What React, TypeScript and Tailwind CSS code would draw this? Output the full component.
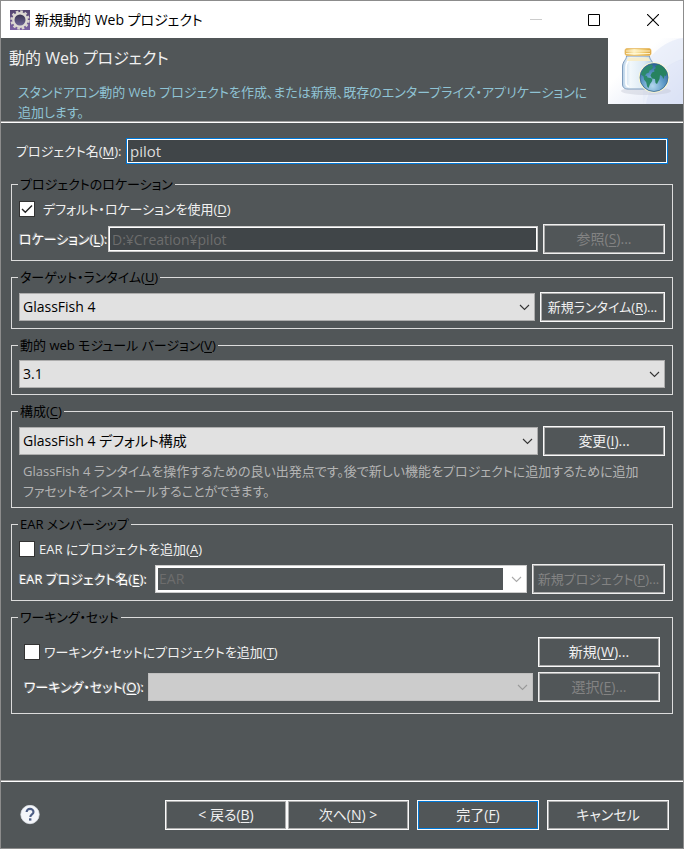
import { useState } from 'react';
import type { ReactNode } from 'react';
import clsx from 'clsx';

const Key = ({ k }: { k: string }) => (
    <>(<span className="underline underline-offset-2">{k}</span>)</>
);

const Chevron = ({ className }: { className?: string }) => (
    <svg className={className} width="11" height="7" viewBox="0 0 11 7" fill="none" stroke="currentColor" strokeWidth="1.1">
        <path d="M1 1l4.500 4.500L10 1" />
    </svg>
);

const EclipseIcon = () => (
    <svg width="20" height="20" viewBox="0 0 20 20">
        <defs>
            <linearGradient id="gear-bg" x1="0" y1="0" x2="0" y2="1">
                <stop offset="0" stopColor="#54466f" />
                <stop offset="1" stopColor="#7c62a4" />
            </linearGradient>
            <linearGradient id="gear-hole" x1="0" y1="0" x2="0" y2="1">
                <stop offset="0" stopColor="#34304a" />
                <stop offset="1" stopColor="#746a9c" />
            </linearGradient>
        </defs>
        <rect width="20" height="20" fill="url(#gear-bg)" />
        <circle cx="10" cy="10" r="8.500" fill="none" stroke="#d8d4cf" strokeWidth="2.400" strokeDasharray="2.600 1.850" />
        <circle cx="10" cy="10" r="6.700" fill="url(#gear-hole)" stroke="#dedad4" strokeWidth="2.400" />
    </svg>
);

const WizardBanner = () => (
    <svg className="block shrink-0" width="75" height="66" viewBox="0 0 75 66">
        <defs>
            <linearGradient id="banner-bg" x1="0" y1="0" x2="1" y2="1">
                <stop offset="0.35" stopColor="#ffffff" />
                <stop offset="1" stopColor="#dce3f5" />
            </linearGradient>
            <linearGradient id="jar" x1="0" y1="0" x2="1" y2="0">
                <stop offset="0" stopColor="#b9d2e8" />
                <stop offset="0.25" stopColor="#f2f8fc" />
                <stop offset="0.7" stopColor="#dbe9f4" />
                <stop offset="1" stopColor="#a9c6df" />
            </linearGradient>
            <linearGradient id="lid" x1="0" y1="0" x2="1" y2="0">
                <stop offset="0" stopColor="#e3b04a" />
                <stop offset="0.35" stopColor="#fdf0bf" />
                <stop offset="0.7" stopColor="#f0cb70" />
                <stop offset="1" stopColor="#dba23a" />
            </linearGradient>
            <radialGradient id="ocean" cx="0.45" cy="0.8" r="0.8">
                <stop offset="0" stopColor="#b4d8ee" />
                <stop offset="0.5" stopColor="#5f9bc8" />
                <stop offset="1" stopColor="#2a5f96" />
            </radialGradient>
        </defs>
        <rect width="75" height="66" fill="url(#banner-bg)" />
        <path d="M35 28C46 12 60 2 75 0v22C58 25 45 42 35 66z" fill="#e6ebf8" opacity="0.7" />
        <path d="M38 66C42 44 54 27 75 21v45z" fill="#d8e0f5" opacity="0.5" />
        <ellipse cx="38" cy="53" rx="25" ry="4" fill="#b9bccb" opacity="0.35" />
        <path d="M18.500 18h23c0 4 4 5 4 11v17c0 4-2 5-5 5H20c-4 0-5.500-2-5.500-5V29c0-6 4-7 4-11z" fill="url(#jar)" stroke="#7f9cbd" strokeWidth="1" />
        <path d="M21.500 20c-1 3-3.500 5-3.500 9v16c0 2 1 3.500 3 3.500" fill="none" stroke="#fff" strokeWidth="1.600" />
        <path d="M20.500 19.500h20l2 3.500H19z" fill="#f8edc8" opacity="0.9" />
        <rect x="17" y="10.500" width="26" height="7" rx="2" fill="url(#lid)" stroke="#e6b965" strokeWidth="0.800" />
        <path d="M18 13h24M18 15.500h24" stroke="#fff6d6" strokeWidth="0.900" />
        <circle cx="46" cy="39.500" r="15.300" fill="#fbf7cf" />
        <circle cx="46" cy="39.500" r="14" fill="url(#ocean)" stroke="#36648f" strokeWidth="0.800" />
        <path d="M33 36c1-4 5-8 10-9.500l2 .5-1 1.500 1.500 1-2 2-2 1-.5 2-2.500 1-1.500 2 2 .5.500 1.500 3 .5c2.500.5 2 2.500 1 4l-1.500 2-1.500 4c-2-1-1.500-4-2.500-6l-2-2.500-.5-3-2.500-2z" fill="#2c8a6c" />
        <path d="M48 30l-1-1.500 3-2c4 1 7.500 4 9 8.500l-1 3-1.500-.5-1 3.500-1.500-3-2-1-.5 4-2.500 5-1.500-1-.5-4-3-.5-1.500-3 1.500-3 2.500-1-.5-2z" fill="#27825f" />
    </svg>
);

const Button = ({ children, disabled, primary, className }: {
    children: ReactNode; disabled?: boolean; primary?: boolean; className?: string;
}) => (
    <button
        type="button"
        disabled={disabled}
        className={clsx(
            'h-[30px] shrink-0 whitespace-nowrap border p-px text-center',
            disabled ? 'border-[#f0f0f0] text-[#838383]' : 'border-[#fafafa] text-[#f0f0f0]',
            className ?? 'w-[122px] text-[14px]'
        )}
    >
        <span className={clsx('-m-px flex h-7 items-center justify-center border', primary ? 'border-[#0078d7]' : 'border-[#adadad]')}>
            <span>{children}</span>
        </span>
    </button>
);

const Select = ({ id, label, value, disabled }: { id?: string; label?: string; value?: string; disabled?: boolean }) => (
    <div className="relative min-w-0 flex-1">
        <select
            id={id}
            aria-label={label}
            disabled={disabled}
            className={clsx(
                'block h-7 w-full appearance-none border px-[3px] pr-6 text-[14px] text-black opacity-100',
                disabled ? 'border-[#bfbfbf] bg-[#ccc]' : 'border-[#adadad] bg-[#e1e1e1]'
            )}
        >
            {value && <option>{value}</option>}
        </select>
        <Chevron className={clsx('pointer-events-none absolute right-[5px] top-[11px]', disabled ? 'text-[#9a9a9a]' : 'text-[#333]')} />
    </div>
);

const Group = ({ title, children, className }: { title: ReactNode; children: ReactNode; className?: string }) => (
    <fieldset className="min-w-0 border border-[#dcdcdc]">
        <legend className="ml-[6px] h-5 px-[2px] leading-5 text-black">{title}</legend>
        <div className={clsx('flex flex-col gap-[5px]', className ?? 'px-[7px] pb-[6px] pt-[5px]')}>{children}</div>
    </fieldset>
);

const Check = ({ id, checked, onChange, children, gap }: {
    id: string; checked: boolean; onChange: () => void; children: ReactNode; gap?: string;
}) => (
    <div className={clsx('flex h-5 items-center', gap ?? 'gap-1')}>
        <span className="relative block h-4 w-4">
            <input
                id={id}
                type="checkbox"
                checked={checked}
                onChange={onChange}
                className="block h-4 w-4 appearance-none border border-[#333] bg-white"
            />
            {checked && (
                <svg className="pointer-events-none absolute inset-0" width="16" height="16" viewBox="0 0 16 16" fill="none" stroke="#222" strokeWidth="1.400">
                    <path d="M3 8l3.300 3.300L13 4.500" />
                </svg>
            )}
        </span>
        <label htmlFor={id} className="whitespace-nowrap text-[#f0f0f0]">{children}</label>
    </div>
);

// disabled labels get the classic embossed look
const etched = 'shrink-0 whitespace-nowrap text-white [text-shadow:-1px_-1px_0_#8f8f8f]';

const App = () => {
    const [name, setName] = useState('pilot');
    const [useDefault, setUseDefault] = useState(true);
    const [addToEar, setAddToEar] = useState(false);
    const [addToSet, setAddToSet] = useState(false);

    return (
        <div className="flex min-h-screen flex-col border border-[#8c8c8c] bg-[#515658] font-['Open_Sans','Noto_Sans_CJK_JP',sans-serif] text-[13px] leading-5 [font-feature-settings:'palt']">
            {/* Title bar */}
            <div className="flex h-[37px] items-center bg-white pl-[9px] text-black">
                <EclipseIcon />
                <h1 className="ml-[5px] flex-1 text-[14px]">新規動的 Web プロジェクト</h1>
                <button type="button" aria-label="最小化" disabled className="flex h-full w-[58px] items-center justify-center text-[#ccc]">
                    <svg width="12" height="12" viewBox="0 0 12 12" stroke="currentColor"><path d="M0 5.500h12" /></svg>
                </button>
                <button type="button" aria-label="最大化" className="flex h-full w-[58px] items-center justify-center">
                    <svg width="12" height="12" viewBox="0 0 12 12" fill="none" stroke="currentColor"><path d="M.5.5h11v11H.5z" /></svg>
                </button>
                <button type="button" aria-label="閉じる" className="flex h-full w-[60px] items-center justify-center">
                    <svg width="12" height="12" viewBox="0 0 12 12" stroke="currentColor" strokeWidth="1.100"><path d="M0 0l12 12M12 0L0 12" /></svg>
                </button>
            </div>

            {/* Wizard header */}
            <div className="flex h-[85px] items-start border-b border-white shadow-[inset_0_-1px_0_#a0a0a0]">
                <div className="min-w-0 flex-1 pl-2 pr-3 pt-[10px]">
                    <h2 className="text-[16px] leading-5 text-[#f0f0f0]">動的 Web プロジェクト</h2>
                    <p className="mt-[14px] pl-[9px] text-[#8fc3d4]">
                        スタンドアロン動的 Web プロジェクトを作成、または新規、既存のエンタープライズ・アプリケーションに追加します。
                    </p>
                </div>
                <WizardBanner />
            </div>

            <main className="flex flex-1 flex-col gap-[6px] px-[10px] pb-[60px] pt-[15px]">
                <div className="mb-1 flex items-center pl-[5px] pr-[5px]">
                    <label htmlFor="name" className="w-[110px] shrink-0 whitespace-nowrap text-[#f0f0f0]">
                        プロジェクト名<Key k="M" />:
                    </label>
                    <input
                        id="name"
                        type="text"
                        autoFocus
                        value={name}
                        onChange={(e) => setName(e.target.value)}
                        className="h-[26px] min-w-0 flex-1 border border-[#0078d7] bg-[#404548] px-[3px] text-[15px] text-[#dcdcdc] shadow-[inset_0_0_0_1px_#fff] outline-none"
                    />
                </div>

                <Group title="プロジェクトのロケーション">
                    <Check id="use-default" checked={useDefault} onChange={() => setUseDefault(!useDefault)} gap="gap-2">
                        デフォルト・ロケーションを使用<Key k="D" />
                    </Check>
                    <div className="flex items-center">
                        <label htmlFor="location" className={clsx(etched, 'w-[89px]')}>ロケーション<Key k="L" />:</label>
                        <input
                            id="location"
                            type="text"
                            disabled
                            value="D:¥Creation¥pilot"
                            className="h-[26px] min-w-0 flex-1 border border-[#ccc] bg-[#404548] px-[3px] text-[14px] text-[#6d6d6d] shadow-[inset_0_0_0_1px_#fff]"
                        />
                        <Button disabled className="ml-[5px] w-[122px] text-[14px]">参照<Key k="S" />...</Button>
                    </div>
                </Group>

                <Group title={<>ターゲット・ランタイム<Key k="U" /></>}>
                    <div className="flex items-center gap-[5px]">
                        <Select label="ターゲット・ランタイム" value="GlassFish 4" />
                        <Button className="w-[125px] text-[13px]">新規ランタイム<Key k="R" />...</Button>
                    </div>
                </Group>

                <Group title={<>動的 web モジュール バージョン<Key k="V" /></>}>
                    <Select label="動的 web モジュール バージョン" value="3.1" />
                </Group>

                <Group title={<>構成<Key k="C" /></>}>
                    <div className="flex items-center gap-[5px]">
                        <Select label="構成" value="GlassFish 4 デフォルト構成" />
                        <Button>変更<Key k="I" />...</Button>
                    </div>
                    <p className="pl-1 pr-5 text-[#b4b4b4]">
                        GlassFish 4 ランタイムを操作するための良い出発点です。後で新しい機能をプロジェクトに追加するために追加ファセットをインストールすることができます。
                    </p>
                </Group>

                <Group title="EAR メンバーシップ">
                    <Check id="ear" checked={addToEar} onChange={() => setAddToEar(!addToEar)}>
                        EAR にプロジェクトを追加<Key k="A" />
                    </Check>
                    <div className="flex items-center">
                        <label htmlFor="ear-name" className={clsx(etched, 'w-[136px]')}>EAR プロジェクト名<Key k="E" />:</label>
                        <div className="flex h-7 min-w-0 flex-1 border border-[#ccc] bg-white p-[2px]">
                            <input id="ear-name" type="text" disabled value="EAR" className="min-w-0 flex-1 bg-[#515658] px-px text-[14px] text-[#6d6d6d]" />
                            <button type="button" aria-label="EAR" disabled className="flex w-[21px] items-center justify-end pr-[2px] text-[#aaa]">
                                <Chevron />
                            </button>
                        </div>
                        <Button disabled className="ml-[5px] w-[133px] text-[13px]">新規プロジェクト<Key k="P" />...</Button>
                    </div>
                </Group>

                <Group title="ワーキング・セット" className="px-3 pb-[11px] pt-[10px]">
                    <div className="flex items-center justify-between">
                        <Check id="working-set" checked={addToSet} onChange={() => setAddToSet(!addToSet)}>
                            ワーキング・セットにプロジェクトを追加<Key k="T" />
                        </Check>
                        <Button>新規<Key k="W" />...</Button>
                    </div>
                    <div className="flex items-center">
                        <label htmlFor="set-name" className={clsx(etched, 'w-[124px]')}>ワーキング・セット<Key k="O" />:</label>
                        <Select id="set-name" disabled />
                        <Button disabled className="ml-[5px] w-[122px] text-[14px]">選択<Key k="E" />...</Button>
                    </div>
                </Group>
            </main>

            {/* Button bar */}
            <footer className="flex items-center border-t border-[#a0a0a0] pb-[18px] pl-[19px] pr-[14px] pt-[19px] shadow-[inset_0_1px_0_#fff]">
                <button type="button" aria-label="ヘルプ" className="mr-auto">
                    <svg width="20" height="20" viewBox="0 0 20 20">
                        <circle cx="10" cy="9.500" r="9.200" fill="#f4f6fa" stroke="#dfe3ea" strokeWidth="0.800" />
                        <path d="M6.600 7.100C6.600 4.900 8 3.900 10 3.900s3.500 1.100 3.500 3c0 2.400-3.200 2.500-3.200 5" fill="none" stroke="#4d5e85" strokeWidth="2.100" />
                        <rect x="9" y="13.300" width="2.400" height="2.300" fill="#4d5e85" />
                    </svg>
                </button>
                <Button>&lt; 戻る<Key k="B" /></Button>
                <Button>次へ<Key k="N" /> &gt;</Button>
                <Button primary className="ml-2 w-[122px] text-[14px]">完了<Key k="F" /></Button>
                <Button className="ml-2 w-[122px] text-[14px]">キャンセル</Button>
            </footer>
        </div>
    );
};

export default App;
